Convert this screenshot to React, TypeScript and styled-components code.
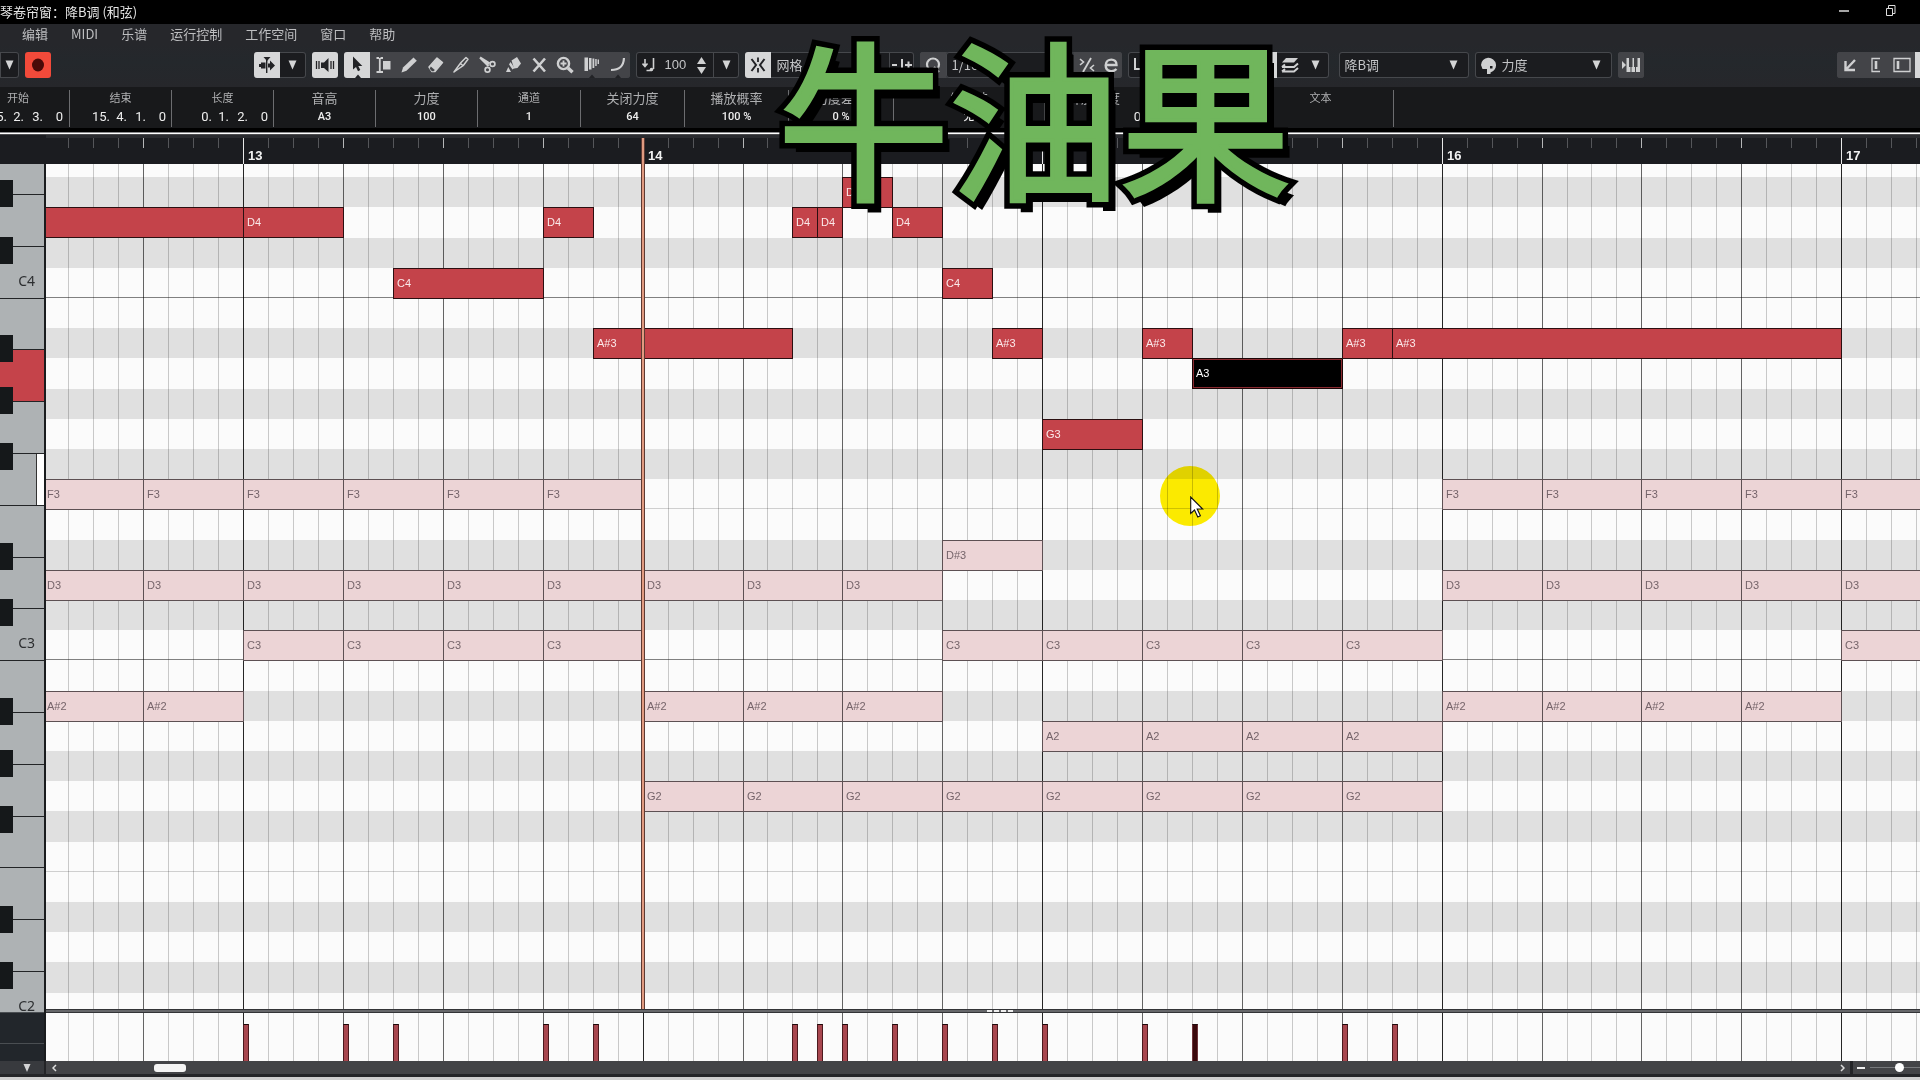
import React from "react";
import styled, { createGlobalStyle, css } from "styled-components";

/* ---------- musical geometry ---------- */

const STEP = 24.97; // width of a sixteenth
const ORIGIN = 197.1; // bar 13, measured from the left edge of the roll
const ROW = 30.2;
const FIRST_ROW = 13.2;
const KEY = 51.8;

const stepX = (n: number) => Math.round(ORIGIN + STEP * n);
const rowY = (i: number) => Math.round(FIRST_ROW + ROW * i);
const keyY = (k: number) => Math.round(30 + KEY * k);

const PITCHES = [
  "D#4", "D4", "C#4", "C4", "B3", "A#3", "A3", "G#3", "G3", "F#3", "F3", "E3",
  "D#3", "D3", "C#3", "C3", "B2", "A#2", "A2", "G#2", "G2", "F#2", "F2", "E2",
  "D#2", "D2", "C#2", "C2", "B1",
];

type Kind = "lead" | "picked" | "chord";
interface NoteData { pitch: string; from: number; to: number; kind: Kind; mute?: boolean }

const lead = (pitch: string, from: number, to: number, kind: Kind = "lead"): NoteData => ({ pitch, from, to, kind });
const chords = (pitch: string, starts: number[]): NoteData[] =>
  starts.map((from) => ({ pitch, from, to: from + 4, kind: "chord" }));

const NOTES: NoteData[] = [
  ...chords("F3", [-8, -4, 0, 4, 8, 12, 48, 52, 56, 60, 64]),
  ...chords("D#3", [28]),
  ...chords("D3", [-8, -4, 0, 4, 8, 12, 16, 20, 24, 48, 52, 56, 60, 64]),
  ...chords("C3", [0, 4, 8, 12, 28, 32, 36, 40, 44, 64]),
  ...chords("A#2", [-8, -4, 16, 20, 24, 48, 52, 56, 60]),
  ...chords("A2", [32, 36, 40, 44]),
  ...chords("G2", [16, 20, 24, 28, 32, 36, 40, 44]),
  { pitch: "D4", from: -10, to: 0, kind: "lead", mute: true },
  lead("D4", 0, 4), lead("C4", 6, 12), lead("D4", 12, 14), lead("A#3", 14, 22),
  lead("D4", 22, 23), lead("D4", 23, 24), lead("D#4", 24, 26), lead("D4", 26, 28),
  lead("C4", 28, 30), lead("A#3", 30, 32), lead("G3", 32, 36), lead("A#3", 36, 38),
  lead("A3", 38, 44, "picked"), lead("A#3", 44, 46), lead("A#3", 46, 64),
];

const HITS = [0, 4, 6, 12, 14, 22, 23, 24, 26, 28, 30, 32, 36, 38, 44, 46];
const STEPS = Array.from({ length: 76 }, (_, i) => i - 7);
const WHITE_KEYS = ["E4", "D4", "C4", "B3", "A3", "G3", "F3", "E3", "D3", "C3", "B2", "A2", "G2", "F2", "E2", "D2", "C2"];
const BLACK_KEYS = [16, 73, 171, 223, 279, 379, 435, 534, 586, 642, 742, 798];

/* ---------- shell ---------- */

const Global = createGlobalStyle`
  * { box-sizing: border-box; }
  body { margin: 0; background: #000; overflow: hidden; }
  button, input, select {
    font: inherit; color: inherit; margin: 0; padding: 0; border: 0;
    background: none; border-radius: 0; appearance: none; outline: none;
  }
`;

const sans = `"Liberation Sans", "Noto Sans CJK SC", sans-serif`;
const cjk = `"Noto Sans CJK SC", sans-serif`;

const Window = styled.div`
  position: relative;
  display: flex;
  flex-direction: column;
  height: 100vh;
  overflow: hidden;
  background: #26272b;
  color: #c9cacc;
  font: 13px/16px ${cjk};
`;

const TitleBar = styled.header`
  display: flex;
  justify-content: space-between;
  align-items: center;
  height: 24px;
  background: #000;
  color: #e4e4e4;
  white-space: nowrap;
`;

const TitleButtons = styled.div`
  display: flex;
  gap: 20px;
  padding-right: 17px;
  button { width: 26px; height: 20px; display: flex; }
`;

const MenuBar = styled.nav`
  display: flex;
  align-items: center;
  gap: 23px;
  height: 20px;
  padding-left: 22px;
  color: #bdbec0;
  a { color: inherit; text-decoration: none; }
`;

/* ---------- toolbar ---------- */

const Toolbar = styled.div`
  display: flex;
  justify-content: space-between;
  align-items: center;
  height: 43px;
  padding-bottom: 1px;
  background: linear-gradient(#26272b, #24282c 40%, #26272b);
`;

const Cluster = styled.div<{ $lead?: number }>`
  display: flex;
  gap: 6px;
  padding-left: ${(p) => p.$lead ?? 0}px;
`;

const Box = styled.div<{ $width?: number; $tone?: "dark" | "grey"; $before?: number; $open?: "left" | "right" }>`
  display: flex;
  width: ${(p) => (p.$width ? p.$width + "px" : "auto")};
  height: 26px;
  margin-left: ${(p) => p.$before ?? 0}px;
  overflow: hidden;
  border-radius: 3px;
  background: ${(p) => (p.$tone === "grey" ? "#434448" : "#1b1c1f")};
  box-shadow: inset 0 0 0 1px ${(p) => (p.$tone === "grey" ? "#434448" : "#46484c")};
  ${(p) => p.$open === "left" && css`border-top-left-radius: 0; border-bottom-left-radius: 0;`}
  ${(p) => p.$open === "right" && css`border-top-right-radius: 0; border-bottom-right-radius: 0;`}
`;

const tones = {
  plain: css`color: #cfd0d1;`,
  grey: css`background: #434448; color: #cfd0d1;`,
  lit: css`background: #d6d7d8; color: #222326;`,
  record: css`background: #f24a3a; color: #480a08; border-radius: 3px;`,
};

const Tool = styled.button<{ $tone?: keyof typeof tones; $width?: number }>`
  flex: none;
  display: flex;
  align-items: center;
  justify-content: center;
  width: ${(p) => p.$width ?? 26}px;
  height: 26px;
  ${(p) => tones[p.$tone ?? "plain"]}
`;

const Field = styled.label<{ $width: number; $gap?: number }>`
  display: flex;
  align-items: center;
  gap: ${(p) => p.$gap ?? 6}px;
  width: ${(p) => p.$width}px;
  padding: 0 11px 0 6px;
  color: #c4c5c7;
  select { flex: 1; min-width: 0; height: 24px; }
  input { width: 22px; font: 13px/16px ${sans}; }
`;

const NumberField = styled(Field)`
  padding-right: 6px;
`;

const Spin = styled.span`
  display: flex;
  flex-direction: column;
  gap: 3px;
`;

const Rule = styled.span`
  width: 1px;
  background: #46484c;
`;

const Icon = ({ children, size = 26 }: { children: React.ReactNode; size?: number }) => (
  <svg width={size} height={26} viewBox={`0 0 ${size} 26`} fill="none" stroke="currentColor" strokeWidth="2" aria-hidden="true">
    {children}
  </svg>
);

const Caret = () => (
  <svg width="9" height="10" viewBox="0 0 9 10" fill="#d3d4d5" aria-hidden="true"><path d="M0.5 0.5h8L4.5 9.5z" /></svg>
);

const TOOLS: { name: string; art: React.ReactNode }[] = [
  { name: "选择", art: <g fill="currentColor" stroke="none"><path d="M9 4.500v13l3-2.600 2 4.300 2.300-1.100-2-4.100h4z" /><path d="M11 26l3-3.500 3 3.500z" /></g> },
  { name: "范围", art: <><path d="M6.500 6h2.500m1.500 0H13M9.800 6v14M6.500 20h6.500" strokeWidth="1.800" /><path d="M13 9h7.500v8.500H13z" fill="currentColor" stroke="none" /></> },
  { name: "绘制", art: <path d="M5.500 20.500l1.500-5L17.500 5.500l3.300 3.200L10.500 18.700z" fill="currentColor" stroke="none" /> },
  { name: "擦除", art: <><path d="M7 15l8-9 5.500 4.500-7.500 9H10z" fill="currentColor" strokeLinejoin="round" strokeWidth="1.500" /><path d="M8.800 14.500l4 3.500-1.200 1.200h-1.600l-2.300-2.500z" fill="#434448" stroke="none" /></> },
  { name: "修剪", art: <path d="M6 20l7-9.500 5-5 2 1.800-4.500 6-4.500 3.200zM12.500 11.500l3 2.500" strokeWidth="1.500" strokeLinejoin="round" /> },
  { name: "分割", art: <><path d="M6 5.500l8.500 8.500M6 5.500l9.500 6" strokeWidth="2.200" /><circle cx="18.500" cy="12" r="2.400" strokeWidth="1.700" /><circle cx="13.500" cy="17.800" r="2.400" strokeWidth="1.700" /></> },
  { name: "粘合", art: <g fill="currentColor" stroke="none"><path d="M11.500 8.500L17 5l4 6.500-3.500 4.500-3.500.5z" /><path d="M10.500 10l4 6-2 1.500-3.500-5z" /><path d="M8.300 15l2.700 5H6z" /></g> },
  { name: "静音", art: <path d="M7.500 6.500l11.500 13M19 6.500l-11.500 13" strokeWidth="2.600" /> },
  { name: "缩放", art: <><circle cx="11.500" cy="11.500" r="5.600" strokeWidth="2.400" /><path d="M16 16l4.500 4.300" strokeWidth="3.400" /><path d="M11.500 8.500v6M8.500 11.500h6" strokeWidth="1.800" /></> },
  { name: "时间变形", art: <g fill="currentColor" stroke="none"><path d="M6.500 5.500h3.500V19H6.500zM11 6h2.500v11.500H11zM14.500 6.500h1.800V16h-1.800zM17.200 7h1.500v7h-1.500zM19.600 7.500h1.400v4.500h-1.400z" /><path d="M11 26l3-3.500 3 3.500z" fill="#222326" /></g> },
  { name: "线条", art: <><path d="M7 18c8 0 12.500-3 13-12" strokeWidth="2.200" /><path d="M11 26l3-3.500 3 3.500z" fill="#222326" stroke="none" /></> },
];

/* ---------- info line ---------- */

const InfoLine = styled.div`
  display: flex;
  height: 41px;
  margin-left: -33px;
  padding: 3px 0 1px;
  background: #18191b;
`;

const InfoCell = styled.div<{ $width: number; $small?: boolean }>`
  flex: none;
  width: ${(p) => p.$width}px;
  border-right: 1px solid #6c6d70;
  text-align: center;
  color: #aeafb1;
  font-size: ${(p) => (p.$small ? 11 : 13)}px;
  line-height: 15px;
`;

const InfoValue = styled.div`
  height: 22px;
  color: #eeeeee;
  font: 500 11px/24px Roboto, ${cjk};
`;

const TimeValue = styled.div`
  display: grid;
  grid-template-columns: 40px 17px 19px 20px;
  height: 22px;
  text-align: right;
  color: #eeeeee;
  font: 13px/24px Roboto, sans-serif;
`;

const INFO: { label: string; value?: string; time?: string[]; width: number; small?: boolean }[] = [
  { label: "开始", time: ["15.", "2.", "3.", "0"], width: 103, small: true },
  { label: "结束", time: ["15.", "4.", "1.", "0"], width: 102, small: true },
  { label: "长度", time: ["0.", "1.", "2.", "0"], width: 102, small: true },
  { label: "音高", value: "A3", width: 102 },
  { label: "力度", value: "100", width: 102 },
  { label: "通道", value: "1", width: 103, small: true },
  { label: "关闭力度", value: "64", width: 104 },
  { label: "播放概率", value: "100 %", width: 104 },
  { label: "力度差异", value: "0 %", width: 105 },
  { label: "发音法", value: "无", width: 151 },
  { label: "释放长度", time: ["", "", "", "0"], width: 99 },
  { label: "语音", value: "", width: 104 },
  { label: "文本", value: "", width: 146, small: true },
];

/* ---------- ruler ---------- */

const Seam = styled.div`
  height: 7px;
  background: linear-gradient(#000 0 4px, #8c8c8e 4px 5px, #ffffff 5px 6px, #4a4a4d 6px);
`;

const Ruler = styled.div`
  position: relative;
  height: 29px;
  margin-left: 46px;
  background: #1b1c20;
  border-top: 3px solid #2a2b2f;
  box-shadow: -46px 0 0 #1b1c20;
`;

const Tick = styled.span<{ $level: number }>`
  position: absolute;
  top: 0;
  width: 1px;
  height: ${(p) => (p.$level === 2 ? 26 : 10)}px;
  background: ${(p) => ["#55565a", "#b5b6b8", "#e8e8e8"][p.$level]};
  color: #f2f2f2;
  font: bold 13px/16px ${sans};
  b { position: absolute; top: 10px; left: 5px; }
`;

/* ---------- editor ---------- */

const Editor = styled.main`
  display: flex;
  flex: 1;
  min-height: 0;
`;

const KeyColumn = styled.aside`
  display: flex;
  flex-direction: column;
  width: 46px;
  border-right: 2px solid #1a1c1e;
`;

const Keyboard = styled.div`
  position: relative;
  flex: 1;
  min-height: 0;
  overflow: hidden;
  background: #aeb2b4;
`;

const WhiteKey = styled.div<{ $on?: boolean; $marked?: boolean }>`
  display: flex;
  align-items: flex-end;
  justify-content: flex-end;
  padding: 0 9px 8px 0;
  border-bottom: 1px solid #222426;
  background: ${(p) => (p.$on ? "#c5434a" : "#aeb2b4")};
  ${(p) => p.$marked && css`background: linear-gradient(90deg, #aeb2b4 36px, #333 36px 37px, #fff 37px);`}
  color: #2c2e30;
  font: 14px/18px "Noto Sans", sans-serif;
`;

const BlackKey = styled.div`
  position: absolute;
  left: 0;
  width: 13px;
  height: 27px;
  background: #15181a;
`;

const LaneHead = styled.div`
  height: 49px;
  padding-top: 1px;
  background: #22262b;
  border-top: 1px solid #4a4e52;
  &::after { content: ""; display: block; height: 29px; border-bottom: 1px solid #4a4e52; }
`;

const Stage = styled.div`
  display: flex;
  flex-direction: column;
  flex: 1;
  min-width: 0;
`;

const Roll = styled.section`
  position: relative;
  flex: 1;
  min-height: 0;
  overflow: hidden;
  background: #fbfbfb;
`;

const Lane = styled.div<{ $dark: boolean; $edge?: string }>`
  background: ${(p) => (p.$dark ? "#e0e0e0" : "#fbfbfb")};
  border-bottom: ${(p) => (p.$edge ? `1px solid ${p.$edge}` : "0")};
`;

const GridLine = styled.span<{ $level: number }>`
  position: absolute;
  top: 0;
  bottom: 0;
  width: 1px;
  background: ${(p) => ["rgba(0,0,0,.2)", "rgba(0,0,0,.6)", "rgba(0,0,0,.85)"][p.$level]};
`;

const noteKinds = {
  lead: css`background: #c4434a; border-color: #2b0f11; color: #fbe9ea;`,
  picked: css`background: #000; border-color: #1a0506; color: #fff; box-shadow: inset 0 0 0 1px #8a2a30;`,
  chord: css`background: #ecd4d6; border-color: #5d5053; color: #75646a;`,
};

const Note = styled.div<{ $kind: Kind }>`
  position: absolute;
  height: 31px;
  overflow: hidden;
  padding-left: 3px;
  border: 1px solid;
  font: 11px/29px ${sans};
  ${(p) => noteKinds[p.$kind]}
`;

const Playhead = styled.div`
  position: absolute;
  z-index: 2;
  top: 0;
  bottom: 0;
  width: 4px;
  background: #e09a80;
  border: solid #5e3a33;
  border-width: 0 1px;
`;

const Spot = styled.div`
  position: absolute;
  left: 1114px;
  top: 302px;
  width: 60px;
  height: 60px;
  border-radius: 50%;
  background: #ffee00;
  mix-blend-mode: multiply;
`;

const Pointer = styled.svg`
  position: absolute;
  left: 1144px;
  top: 332px;
`;

const Splitter = styled.div`
  display: flex;
  justify-content: center;
  align-items: center;
  gap: 2px;
  height: 4px;
  padding-left: 34px;
  background: #66676a;
  border: solid #333437;
  border-width: 1px 0;
  i { width: 5px; height: 2px; background: #eee; }
`;

const VelocityLane = styled.section`
  position: relative;
  height: 48px;
  overflow: hidden;
  background: #fbfbfb;
`;

const Hit = styled.div<{ $picked: boolean }>`
  position: absolute;
  bottom: 0;
  width: 6px;
  height: 37px;
  background: ${(p) => (p.$picked ? "#3a080b" : "#a8474f")};
  border: 1px solid ${(p) => (p.$picked ? "#6d3338" : "#4c1a1e")};
  border-top-color: #1d0a0b;
  border-bottom: 0;
`;

/* ---------- bottom strip ---------- */

const BottomBar = styled.footer`
  display: flex;
  align-items: center;
  height: 13px;
  background: #434447;
`;

const Corner = styled.button`
  display: flex;
  align-items: center;
  justify-content: center;
  width: 46px;
  height: 13px;
  padding-left: 10px !important;
  background: #383a3e;
  border-right: 2px solid #232427;
`;

const Arrow = styled.button`
  display: flex;
  align-items: center;
  justify-content: center;
  width: 16px;
  height: 13px;
`;

const Track = styled.div`
  flex: 1;
  padding-left: 92px;
`;

const Thumb = styled.div`
  width: 32px;
  height: 8px;
  border-radius: 3px;
  background: #f4f4f4;
`;

const Zoom = styled.label`
  display: flex;
  align-items: center;
  gap: 5px;
  width: 70px;
  height: 13px;
  padding-left: 4px;
  border-left: 3px solid #232427;
  &::before { content: ""; width: 8px; height: 2px; background: #eee; }
  input {
    width: 50px;
    height: 9px;
    background: linear-gradient(transparent 4px, #77797c 4px 5px, transparent 5px);
  }
  input::-webkit-slider-thumb {
    appearance: none;
    width: 9px;
    height: 9px;
    border-radius: 50%;
    background: #fff;
  }
`;

const Base = styled.div`
  height: 6px;
  background: #242528;
  border-bottom: 3px solid #cfcfcf;
`;

/* Green lettering over a wider black copy that carries the drop shadow. */
const Caption = styled.div`
  position: absolute;
  z-index: 5;
  left: 778px;
  top: 27px;
  color: #70b65c;
  font: 400 171px/172px ${cjk};
  white-space: nowrap;
  pointer-events: none;
  -webkit-text-stroke: 4px #70b65c;
  &::before {
    content: attr(data-text);
    position: absolute;
    z-index: -1;
    left: 0;
    top: 0;
    color: #000;
    -webkit-text-stroke: 15px #000;
    stroke-linejoin: round;
    text-shadow: 9px 11px 0 #000;
  }
`;

const level = (n: number) => (n % 16 === 0 ? 2 : n % 4 === 0 ? 1 : 0);

const GridLines = () => (
  <>
    {STEPS.map((n) => <GridLine key={n} $level={level(n)} style={{ left: stepX(n) }} />)}
  </>
);

export default function App() {
  return (
    <Window>
      <Global />
      <TitleBar>
        <span>琴卷帘窗：降B调 (和弦)</span>
        <TitleButtons>
          <button aria-label="最小化"><svg width="26" height="20" aria-hidden="true"><path d="M8 9h10" stroke="#ddd" strokeWidth="1.500" /></svg></button>
          <button aria-label="还原"><svg width="26" height="20" fill="none" stroke="#ddd" aria-hidden="true"><path d="M9.500 6.500h6v7h-6zM11.500 6V3.500h6.500v8h-2" /></svg></button>
        </TitleButtons>
      </TitleBar>

      <MenuBar>
        {["编辑", "MIDI", "乐谱", "运行控制", "工作空间", "窗口", "帮助"].map((m) => <a key={m} href="#menu">{m}</a>)}
      </MenuBar>

      <Toolbar>
        <Cluster>
          <Box $open="left"><Tool $width={19} aria-label="更多"><Caret /></Tool></Box>
          <Tool $tone="record" aria-label="录音"><Icon><ellipse cx="13" cy="13" rx="6" ry="6.500" fill="currentColor" stroke="none" /></Icon></Tool>
        </Cluster>

        <Cluster $lead={9}>
          <Box $width={52}>
            <Tool $tone="lit" aria-label="自动滚动">
              <Icon><path d="M5 13.500h5" strokeWidth="3" /><path d="M12.700 8v13" strokeWidth="1.400" /><path d="M14 13.500h4" strokeWidth="4" /><path d="M16 8.500l5 5-5 5zM9.500 5h7L13 9zM7 10.500h4.500v6H7z" fill="currentColor" stroke="none" /></Icon>
            </Tool>
            <Tool aria-label="滚动选项"><Caret /></Tool>
          </Box>
          <Box $width={26}>
            <Tool $tone="lit" aria-label="监听">
              <Icon><path d="M9 10.500h3L16.500 6v14L12 16H9z" fill="currentColor" stroke="none" /><path d="M4.500 9v8M7 9v8M19 9v8M21.500 9v8" strokeWidth="1.300" /></Icon>
            </Tool>
          </Box>
          <Box $tone="grey">
            {TOOLS.map((t, i) => (
              <Tool key={t.name} $tone={i === 0 ? "lit" : "plain"} aria-label={t.name}><Icon>{t.art}</Icon></Tool>
            ))}
          </Box>
          <Box $width={103}>
            <NumberField $width={77} $gap={10}>
              <svg width="13" height="14" viewBox="0 0 13 14" fill="none" stroke="#cfd0d1" strokeWidth="1.600" aria-hidden="true"><path d="M3 1v7M0.500 5.500L3 8.500l2.500-3M11.500 0v11" /><circle cx="9.500" cy="11.500" r="1.800" fill="#cfd0d1" stroke="none" /><path d="M9.500 12.500h-5" /></svg>
              <input aria-label="插入力度" defaultValue="100" />
              <Spin>
                <svg width="9" height="7" fill="#cfd0d1" aria-hidden="true"><path d="M0 7h9L4.500 0z" /></svg>
                <svg width="9" height="7" fill="#cfd0d1" aria-hidden="true"><path d="M0 0h9L4.500 7z" /></svg>
              </Spin>
            </NumberField>
            <Rule />
            <Tool $width={25} aria-label="力度选项"><Caret /></Tool>
          </Box>
          <Box $width={169}>
            <Tool $tone="lit" aria-label="吸附">
              <Icon><path d="M13 5.500v4.500M13 16v4.500" strokeWidth="1.800" /><path d="M6.500 7l4.500 6-4.500 6M19.500 7L15 13l4.500 6" strokeWidth="2" /></Icon>
            </Tool>
            <Field $width={118}>
              <select aria-label="吸附类型"><option>网格</option></select><Caret />
            </Field>
            <Rule />
            <Tool $width={24} aria-label="零点吸附"><Icon size={22}><path d="M1 13h5M11 7v13M14 13h7M17.500 9.500v7" /></Icon></Tool>
          </Box>
          <Box $width={202} $tone="grey">
            <Tool $tone="grey" aria-label="量化"><Icon><circle cx="13" cy="12.500" r="6" strokeWidth="2.200" /><path d="M14 15l5 5" strokeWidth="2.200" /></Icon></Tool>
            <Box as="span" $width={128}>
              <Field $width={128}><select aria-label="量化值"><option>1/16</option></select><Caret /></Field>
            </Box>
            <Tool $width={24} aria-label="柔性量化"><Icon size={24}><path d="M17 6L9 20" strokeWidth="1.800" /><path d="M6 7l3.500 3L6 13M20 13l-3.500 3 3.500 3" strokeWidth="1.600" /></Icon></Tool>
            <Tool $width={24} aria-label="量化面板"><Icon size={24}><path d="M8 13h10.500c.5-7-10.500-7.500-10.800.2C7.700 20 15 20.500 18.500 17" strokeWidth="2.400" /></Icon></Tool>
          </Box>
          <Box $width={117}>
            <Field $width={117}>
              <svg width="10" height="14" fill="none" stroke="#cfd0d1" strokeWidth="2" aria-hidden="true"><path d="M1 0v11h9" /></svg>
              <select aria-label="长度量化"><option>量化连接</option></select><Caret />
            </Field>
          </Box>
          <Box $width={78}>
            <Tool $tone="lit" aria-label="显示分部边框"><Icon><path d="M6 8h14v10H6z" /></Icon></Tool>
            <Tool aria-label="编辑多个分部">
              <Icon><path d="M9 6h12l-4 4.500H5z" fill="currentColor" stroke="none" /><path d="M21 11.500l-4 3.500H5M21 16l-4 3.500H5M5 15l3-2.500M5 19.500l3-2.500" strokeWidth="2" /></Icon>
            </Tool>
            <Tool aria-label="分部选项"><Caret /></Tool>
          </Box>
          <Box $width={130} $before={4}>
            <Field $width={130}><select aria-label="当前分部"><option>降B调</option></select><Caret /></Field>
          </Box>
          <Box $width={137}>
            <Field $width={137}>
              <svg width="15" height="17" viewBox="0 0 15 17" aria-hidden="true"><path d="M0 8a7.500 7.500 0 1 1 9.500 7.500V17H6v-5H1.500z" fill="#cfd0d1" /><path d="M9 9h2.500v2.500H9z" fill="#1b1c1f" /></svg>
              <select aria-label="事件颜色"><option>力度</option></select><Caret />
            </Field>
          </Box>
          <Box $width={26} $tone="grey">
            <Tool aria-label="步进输入"><Icon><path d="M4 9l4 4-4 4z" fill="currentColor" stroke="none" /><path d="M8.500 6h2.500v9h1.500v5h-4zM13.500 15h1V6h1.500v9h1v5h-3.500zM18 15h1.500V6H22v14h-4z" fill="currentColor" stroke="none" /></Icon></Tool>
          </Box>
        </Cluster>

        <Cluster>
          <Box $tone="grey" $open="right" $width={83}>
            <Tool aria-label="独立窗口"><Icon><path d="M18 8l-8.500 9M8.500 9v9H18" strokeWidth="2.400" /></Icon></Tool>
            <Tool aria-label="左侧区域"><Icon><path d="M17 6.500H9v13h8" strokeWidth="1.300" /><path d="M13 9v8" strokeWidth="2.600" /></Icon></Tool>
            <Tool aria-label="区域设置"><Icon><path d="M5 6.500h16v13H5z" strokeWidth="1.300" /><path d="M9 9v8" strokeWidth="2.600" /></Icon></Tool>
            <Tool $tone="lit" $width={5} aria-label="设置" />
          </Box>
        </Cluster>
      </Toolbar>

      <InfoLine>
        {INFO.map((c) => (
          <InfoCell key={c.label} $width={c.width} $small={c.small}>
            {c.label}
            {c.time
              ? <TimeValue>{c.time.map((t, i) => <span key={i}>{t}</span>)}</TimeValue>
              : <InfoValue>{c.value}</InfoValue>}
          </InfoCell>
        ))}
      </InfoLine>
      <Seam />

      <Ruler>
        {STEPS.map((n) => (
          <Tick key={n} $level={level(n)} style={{ left: stepX(n) }}>
            {level(n) === 2 && <b>{13 + n / 16}</b>}
          </Tick>
        ))}
        <Playhead style={{ left: stepX(16) - 2 }} />
      </Ruler>

      <Editor>
        <KeyColumn>
          <Keyboard>
            {WHITE_KEYS.map((k, i) => (
              <WhiteKey
                key={k}
                $on={k === "A3"}
                $marked={k === "F3"}
                style={{ height: keyY(i) - (i ? keyY(i - 1) : -1) }}
              >
                {k[0] === "C" ? k : null}
              </WhiteKey>
            ))}
            {BLACK_KEYS.map((y) => <BlackKey key={y} style={{ top: y }} />)}
          </Keyboard>
          <LaneHead />
        </KeyColumn>

        <Stage>
          <Roll>
            <Lane $dark={false} style={{ height: rowY(0) }} />
            {PITCHES.map((p, i) => (
              <Lane
                key={p}
                $dark={p.includes("#")}
                $edge={p[0] === "C" && !p.includes("#") ? "#808080" : p[0] === "F" && !p.includes("#") ? "#cfcfcf" : undefined}
                style={{ height: rowY(i + 1) - rowY(i) }}
              />
            ))}
            <GridLines />
            {NOTES.map((n) => (
              <Note
                key={n.pitch + n.from}
                $kind={n.kind}
                style={{ left: stepX(n.from), top: rowY(PITCHES.indexOf(n.pitch)), width: stepX(n.to) - stepX(n.from) + 1 }}
              >
                {n.mute ? null : n.pitch}
              </Note>
            ))}
            <Playhead style={{ left: stepX(16) - 2 }} />
            <Spot />
            <Pointer width="14" height="22" viewBox="0 0 14 22" aria-hidden="true">
              <path d="M0.700 1v16.500l3.800-3.500 3.300 7 2.600-1.200-3.200-6.800h5.500z" fill="#fff" stroke="#111" strokeWidth="1.100" />
            </Pointer>
          </Roll>
          <Splitter><i /><i /><i /><i /></Splitter>
          <VelocityLane>
            <GridLines />
            {HITS.map((n) => <Hit key={n} $picked={n === 38} style={{ left: stepX(n) }} />)}
          </VelocityLane>
        </Stage>
      </Editor>

      <BottomBar>
        <Corner aria-label="预设"><svg width="8" height="8" fill="#d3d4d5" aria-hidden="true"><path d="M0.500 0h7L4 8z" /></svg></Corner>
        <Arrow aria-label="向左"><svg width="5" height="8" fill="none" stroke="#ddd" strokeWidth="1.500" aria-hidden="true"><path d="M4 1L1 4l3 3" /></svg></Arrow>
        <Track><Thumb /></Track>
        <Arrow aria-label="向右"><svg width="5" height="8" fill="none" stroke="#ddd" strokeWidth="1.500" aria-hidden="true"><path d="M1 1l3 3-3 3" /></svg></Arrow>
        <Zoom><input type="range" aria-label="水平缩放" min="0" max="100" defaultValue="60" /></Zoom>
      </BottomBar>
      <Base />

      <Caption data-text="牛油果">牛油果</Caption>
    </Window>
  );
}
